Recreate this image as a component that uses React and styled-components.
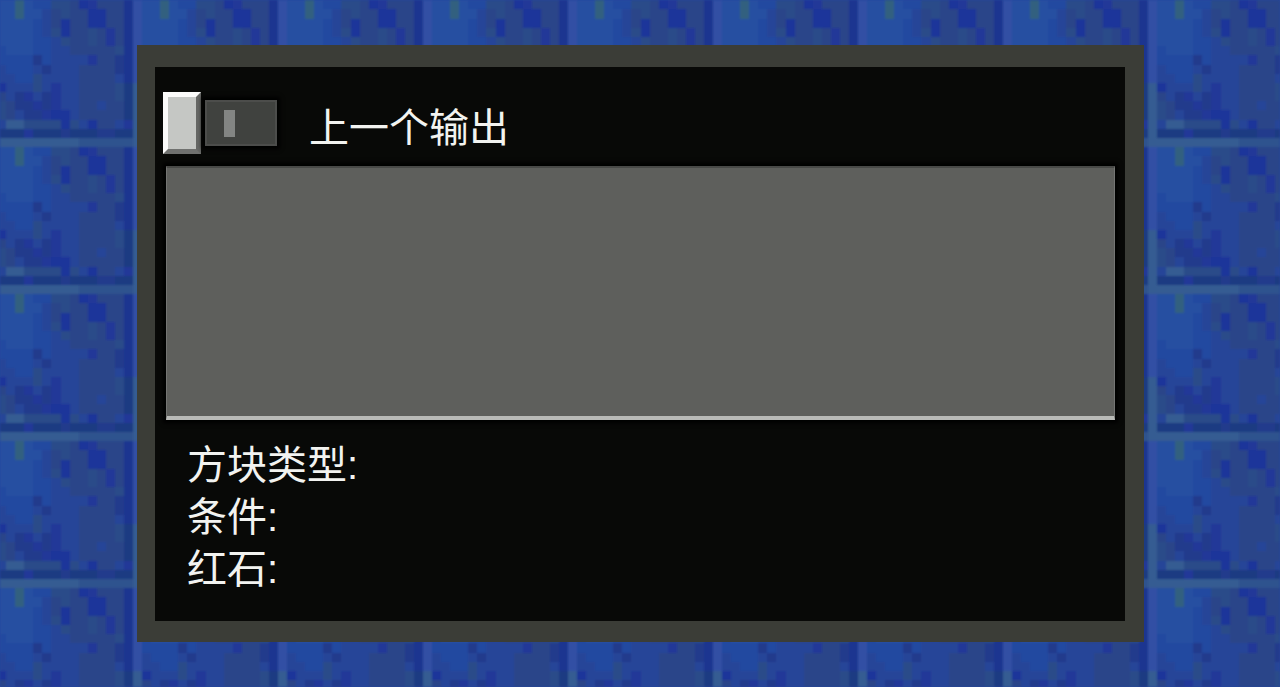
import React from "react";
import styled, { createGlobalStyle } from "styled-components";

const GlobalStyle = createGlobalStyle`
  *, *::before, *::after { box-sizing: border-box; }
  body {
    margin: 0;
    background: #24469c;
    color: #f2f3f0;
    font-family: "Liberation Sans", "Noto Sans CJK SC", sans-serif;
  }
`;

const Screen = styled.div`
  position: relative;
  display: flex;
  min-height: 100vh;
  padding: 45px 136px 45px 137px;
`;

const Backdrop = styled.svg`
  position: absolute;
  inset: 0;
  width: 100%;
  height: 100%;
`;

const Panel = styled.main`
  position: relative;
  flex: 1;
  display: flex;
  flex-direction: column;
  border: solid #3b3d37;
  border-width: 22px 19px 21px 18px;
  background: #080907;
`;

const Header = styled.header`
  display: flex;
  align-items: center;
  gap: 32px;
  padding: 25px 8px 12px;
`;

const Switch = styled.input`
  appearance: none;
  display: flex;
  align-items: center;
  gap: 4px;
  margin: 0;
  cursor: pointer;

  &::before {
    content: "";
    width: 38px;
    height: 62px;
    border: solid;
    border-width: 5px;
    border-color: #fbfbfa #666765 #70716f #fbfbfa;
    background: #c5c7c4;
  }

  &::after {
    content: "";
    width: 72px;
    height: 46px;
    border: 2px solid #4c4d4b;
    background: linear-gradient(#838583, #838583) 17px 8px / 11px 27px no-repeat #40423f;
    box-shadow: 0 0 4px 3px #000;
  }

  &:checked { flex-direction: row-reverse; }
`;

const Caption = styled.label`
  font-size: 40px;
  line-height: 52px;
  padding-top: 10px;
`;

const Output = styled.textarea`
  display: block;
  height: 254px;
  margin: 0 10px 0 11px;
  padding: 8px;
  border: solid;
  border-width: 2px 1px 4px;
  border-color: #484947 #747573 #b9bab7 #747573;
  border-radius: 0;
  outline: none;
  resize: none;
  background: #5e5f5c;
  box-shadow: 0 0 4px 3px #000;
  color: inherit;
  font: inherit;
`;

const Details = styled.ul`
  margin: 0;
  padding: 19px 32px 24px;
  list-style: none;
`;

const Detail = styled.li`
  font-size: 40px;
  line-height: 52px;
`;

const PALETTE = {
  L: "#365b92",
  l: "#2e528e",
  P: "#304fa4",
  C: "#254fa1",
  B: "#2349a0",
  b: "#264598",
  g: "#2a4589",
  G: "#33607f",
  D: "#1f349a",
  d: "#213998",
  N: "#1f3b82",
  n: "#213a8c",
  E: "#1b3490",
  s: "#2c4b89",
};

const BLOCK = [
  "LLLLLLLLLLllllll",
  "PCCGCBBssgDdgggE",
  "PCCGCCbgsggDDggE",
  "PCCCCBbgDggDDggE",
  "PCCCCBbsDggsgdgE",
  "PCCCCBBbsggsgdgE",
  "PBCCCBBbbgggggsE",
  "PBBBBnBbbbbdggnE",
  "PbBBBbnbbbggggnE",
  "PbbBBsbbbbggggbE",
  "LDbbbsbdbbggggsN",
  "LgbndbndbbggggsN",
  "LsgnndndbbggbggN",
  "LsgbnndDDbgggggN",
  "LbLLssssDsbDggbd",
  "LNNNdNNNnNNNnnNN",
];

function PixelWall() {
  return (
    <Backdrop aria-hidden="true">
      <defs>
        <filter id="soften" x="-5%" y="-5%" width="110%" height="110%">
          <feGaussianBlur stdDeviation="1" />
        </filter>
        <pattern id="block" x="-12" y="-9" width="145" height="147" patternUnits="userSpaceOnUse">
          <svg width="145" height="147" viewBox="0 0 16 16" preserveAspectRatio="none" shapeRendering="crispEdges">
            {BLOCK.flatMap((row, y) =>
              [...row].map((key, x) => (
                <rect key={`${x}-${y}`} x={x} y={y} width="1" height="1" fill={PALETTE[key]} />
              ))
            )}
          </svg>
        </pattern>
      </defs>
      <rect width="100%" height="100%" fill="url(#block)" filter="url(#soften)" />
    </Backdrop>
  );
}

export default function App() {
  return (
    <>
      <GlobalStyle />
      <Screen>
        <PixelWall />
        <Panel>
          <Header>
            <Switch type="checkbox" role="switch" id="previous-output" />
            <Caption id="output-caption" htmlFor="previous-output">上一个输出</Caption>
          </Header>
          <Output readOnly aria-labelledby="output-caption" />
          <Details>
            <Detail>方块类型:</Detail>
            <Detail>条件:</Detail>
            <Detail>红石:</Detail>
          </Details>
        </Panel>
      </Screen>
    </>
  );
}
